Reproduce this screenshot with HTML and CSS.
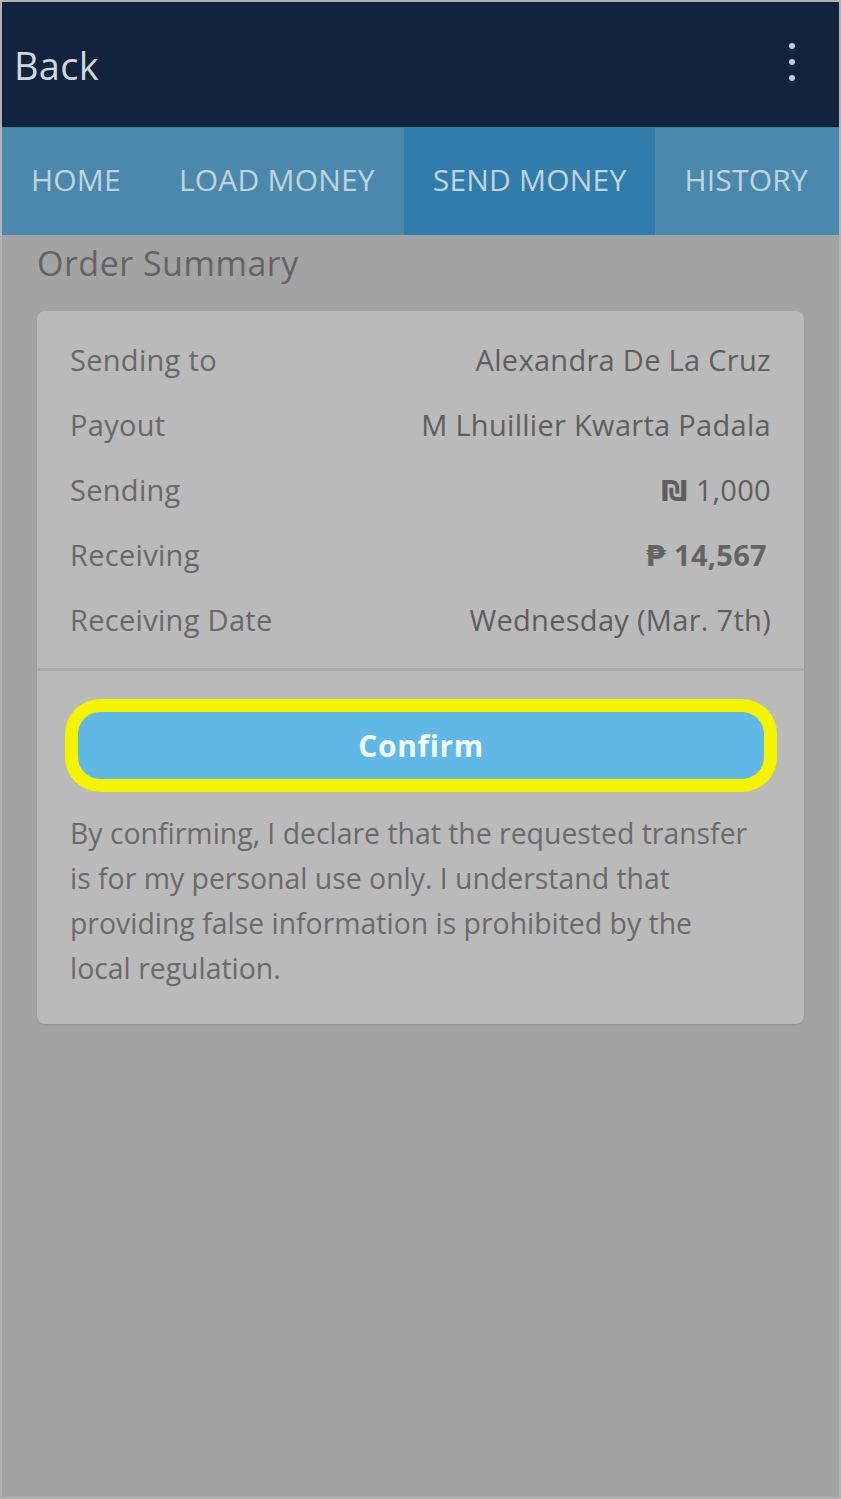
FILE: index.html
```html
<!DOCTYPE html>
<html>
<head>
  <meta charset="UTF-8">
  <title>Order Summary</title>
  <link rel="stylesheet" href="styles.css">
</head>
<body>
  <div id="screen">
    <div id="header">
      <div class="back">Back</div>
      <div class="menu"><span></span><span></span><span></span></div>
    </div>
    <div id="tabs">
      <div class="tab">HOME</div>
      <div class="tab">LOAD MONEY</div>
      <div class="tab active">SEND MONEY</div>
      <div class="tab">HISTORY</div>
    </div>
    <div id="content">
      <div class="title">Order Summary</div>
      <div class="card">
        <div class="rows">
          <div class="row"><span class="label">Sending to</span><span class="value">Alexandra De La Cruz</span></div>
          <div class="row"><span class="label">Payout</span><span class="value">M Lhuillier Kwarta Padala</span></div>
          <div class="row"><span class="label">Sending</span><span class="value"><span class="cur">&#8362;</span> 1,000</span></div>
          <div class="row"><span class="label">Receiving</span><span class="value strong"><span class="cur">&#8369;</span> 14,567</span></div>
          <div class="row"><span class="label">Receiving Date</span><span class="value">Wednesday (Mar. 7th)</span></div>
        </div>
        <div class="actions">
          <div class="button">Confirm</div>
          <p class="note">By confirming, I declare that the requested transfer is for my personal use only. I understand that providing false information is prohibited by the local regulation.</p>
        </div>
      </div>
    </div>
  </div>
</body>
</html>
```
FILE: styles.css
```css
html, body {
	margin:0px;
	padding:0px;
	height:100%;
}

body {
	background:#a3a3a3;
	font-family:"Open Sans","DejaVu Sans",sans-serif;
}

#screen {
	box-sizing:border-box;
	min-height:100%;
	border:2px solid #b2b2b2;
	background:#a3a3a3;
}

#header {
	background:#11233f;
	height:125px;
	display:flex;
	align-items:center;
	justify-content:space-between;
	padding:0px 44px 0px 12px;
}

#header .back {
	color:#d3d6db;
	font-size:38px;
	letter-spacing:0.3px;
}

#header .menu {
	display:flex;
	flex-direction:column;
	gap:10px;
	padding-bottom:6px;
}

#header .menu span {
	width:6px;
	height:6px;
	border-radius:50%;
	background:#c9ccd2;
}

#tabs {
	display:flex;
	height:107px;
	background:#4a89ad;
	border-top:1px solid #3f7ea5;
	overflow:hidden;
}

#tabs .tab {
	display:flex;
	align-items:center;
	flex-shrink:0;
	white-space:nowrap;
	padding:0px 29px 4px 29px;
	color:#c3d3de;
	font-size:30px;
	letter-spacing:0.2px;
}

#tabs .active {
	background:#307cab;
}

#content {
	padding:0px 35px 40px 35px;
}

#content .title {
	color:#636363;
	font-size:34px;
	letter-spacing:0.5px;
	height:76px;
	line-height:56px;
}

.card {
	background:#bababa;
	border-radius:8px;
	box-shadow:0px 1px 2px rgba(0,0,0,0.12);
}

.card .rows {
	padding:16px 33px 16px 33px;
	border-bottom:3px solid #a9a9a9;
}

.card .row {
	display:flex;
	justify-content:space-between;
	align-items:center;
	height:65px;
	font-size:29px;
	letter-spacing:0.3px;
}

.card .label {
	color:#686868;
}

.card .value {
	color:#5e5e5e;
}

.card .strong {
	font-weight:bold;
	color:#646464;
	padding-right:4px;
}

.card .cur {
	font-family:"DejaVu Sans",sans-serif;
	font-weight:bold;
}

.actions {
	padding:41px 40px 33px 41px;
}

.actions .button {
	height:67px;
	line-height:67px;
	text-align:center;
	background:#5fb8e6;
	border-radius:22px;
	box-shadow:0px 0px 0px 13px #f5f400;
	color:#f2f8fc;
	font-size:30px;
	font-weight:bold;
	letter-spacing:0.6px;
}

.actions .note {
	margin:32px 10px 0px -8px;
	color:#6a6a6a;
	font-size:28.4px;
	line-height:45px;
}
```
